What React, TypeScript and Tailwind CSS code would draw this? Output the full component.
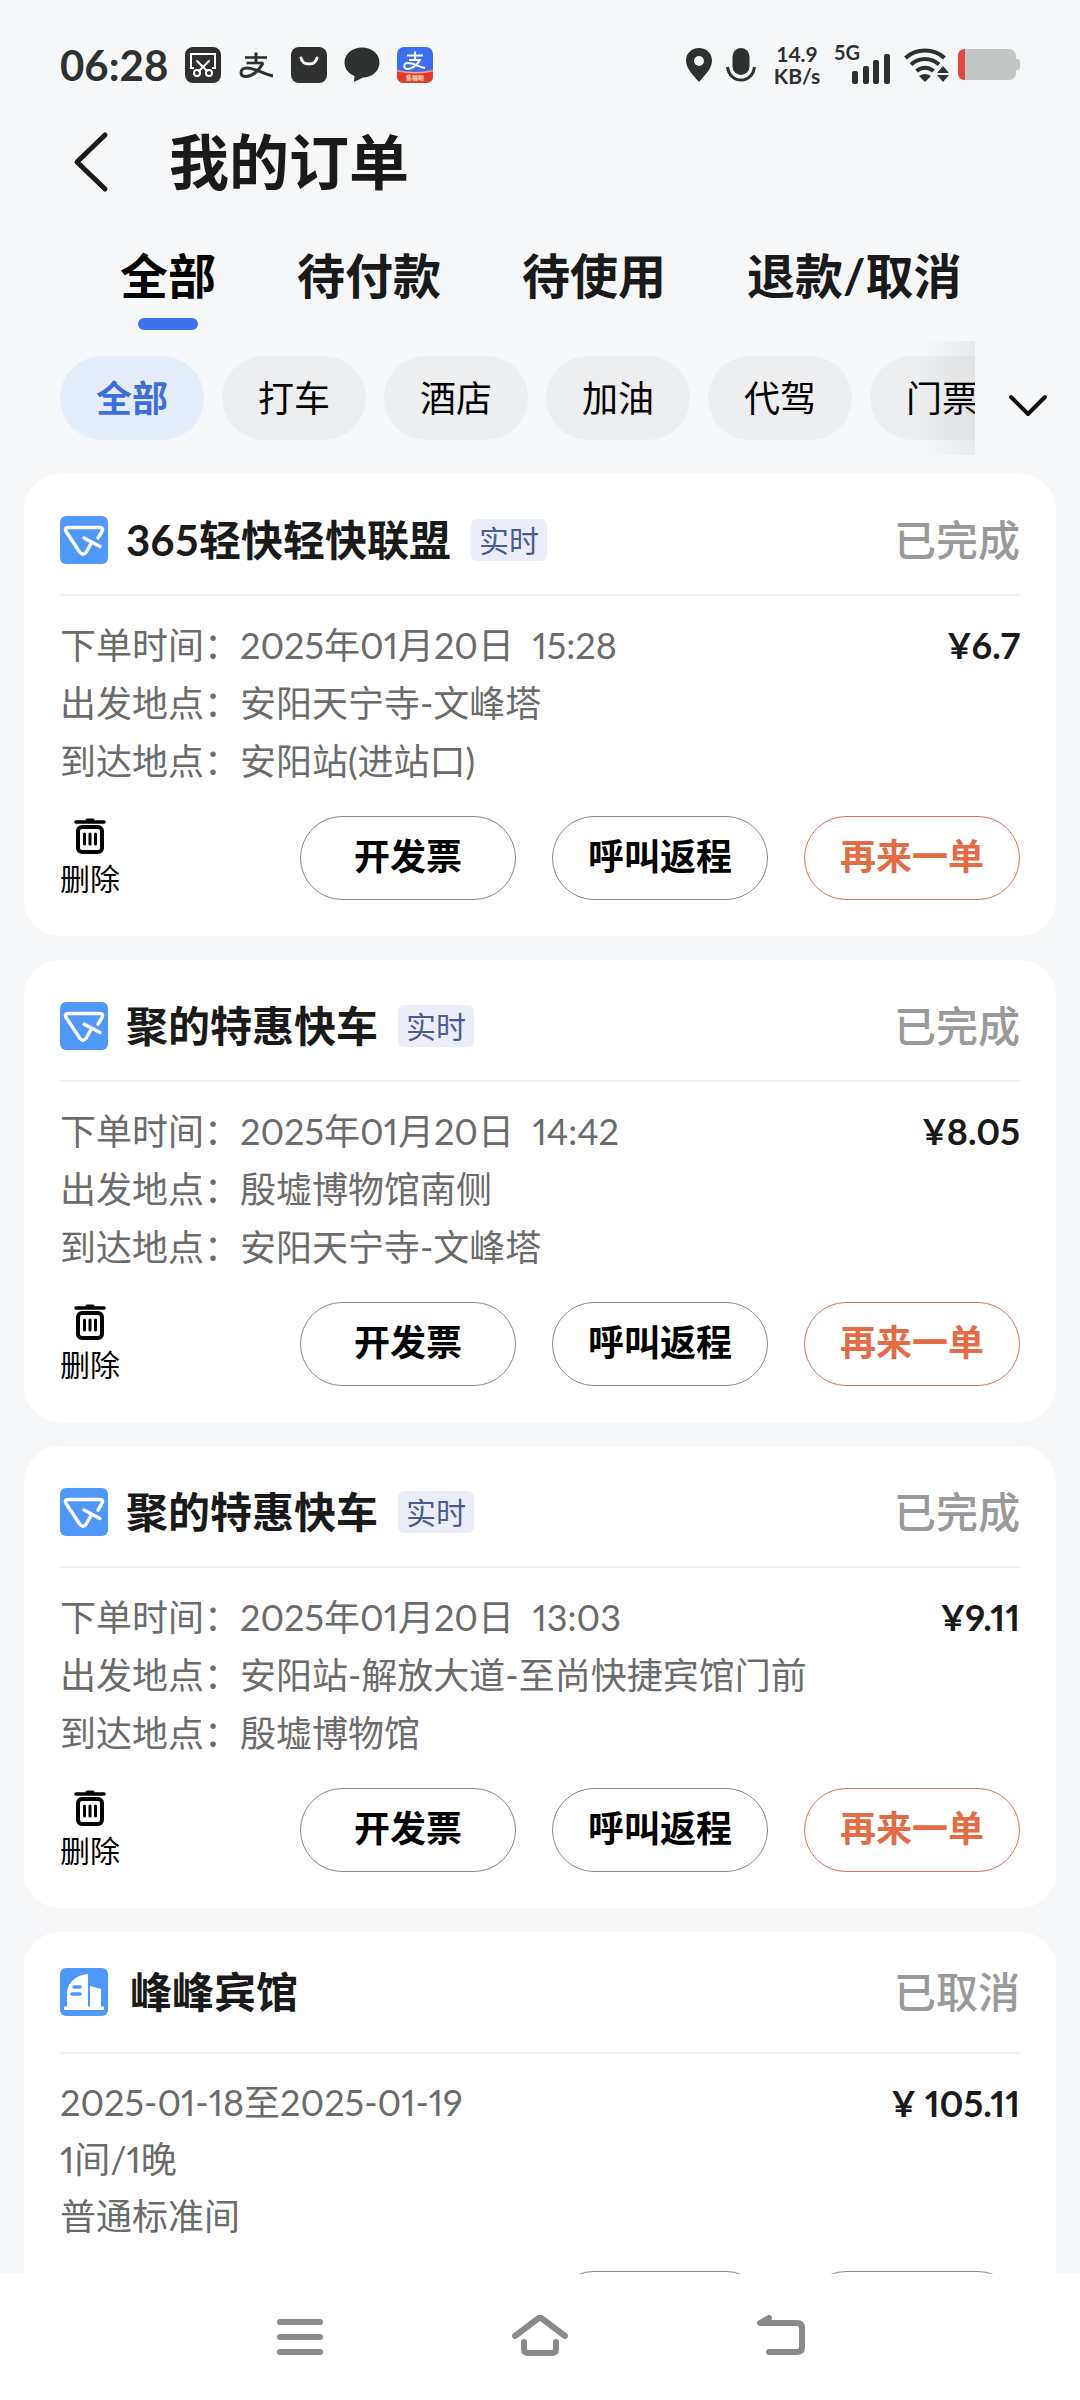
import React, { useState } from 'react';

interface Order {
    id: number;
    kind: 'ride' | 'hotel';
    title: string;
    tag?: string;
    status: string;
    price: string;
    lines: string[];
}

const TABS = ['全部', '待付款', '待使用', '退款/取消'];
const CATEGORIES = ['全部', '打车', '酒店', '加油', '代驾', '门票'];

const ORDERS: Order[] = [
    {
        id: 1,
        kind: 'ride',
        title: '365轻快轻快联盟',
        tag: '实时',
        status: '已完成',
        price: '¥6.7',
        lines: ['下单时间：2025年01月20日  15:28', '出发地点：安阳天宁寺-文峰塔', '到达地点：安阳站(进站口)'],
    },
    {
        id: 2,
        kind: 'ride',
        title: '聚的特惠快车',
        tag: '实时',
        status: '已完成',
        price: '¥8.05',
        lines: ['下单时间：2025年01月20日  14:42', '出发地点：殷墟博物馆南侧', '到达地点：安阳天宁寺-文峰塔'],
    },
    {
        id: 3,
        kind: 'ride',
        title: '聚的特惠快车',
        tag: '实时',
        status: '已完成',
        price: '¥9.11',
        lines: ['下单时间：2025年01月20日  13:03', '出发地点：安阳站-解放大道-至尚快捷宾馆门前', '到达地点：殷墟博物馆'],
    },
    {
        id: 4,
        kind: 'hotel',
        title: '峰峰宾馆',
        status: '已取消',
        price: '¥ 105.11',
        lines: ['2025-01-18至2025-01-19', '1间/1晚', '普通标准间'],
    },
];

const StatusBar: React.FC = () => (
    <div className="flex h-[102px] shrink-0 items-center justify-between px-[60px] pt-7 text-[#2f3131]">
        <div className="flex items-center">
            <span className="text-[42px] leading-9 font-bold">06:28</span>
            <div className="ml-[17px] flex items-center gap-[17px]">
                <svg width="36" height="36" viewBox="0 0 36 36">
                    <rect width="36" height="36" rx="8" fill="currentColor" />
                    <g fill="none" stroke="#fff" strokeWidth="2">
                        <path d="M9 21H6V7h24v14h-3" />
                        <path d="M12 14l10 10M24 14L14 24" strokeLinecap="round" />
                        <circle cx="12" cy="26" r="3" />
                        <circle cx="24" cy="26" r="3" />
                    </g>
                </svg>
                <svg width="36" height="36" viewBox="0 0 36 36">
                    <g fill="none" stroke="currentColor">
                        <path d="M7 10.500h22" strokeWidth="2.600" />
                        <path d="M18 5.500V16" strokeWidth="3" />
                        <path d="M8.500 16h17" strokeWidth="2.600" />
                        <path d="M25 16C21 24 14 29.500 8 29.500c-3 0-5-1.500-5-4 0-2.500 2.500-4.500 6-4.500 8 0 15 5.500 26 8" strokeWidth="3" />
                    </g>
                </svg>
                <svg width="36" height="36" viewBox="0 0 36 36">
                    <rect width="36" height="36" rx="8" fill="currentColor" />
                    <path d="M10 11c2 8 14 8 16 0" fill="none" stroke="#fff" strokeWidth="3" strokeLinecap="round" />
                </svg>
                <svg width="36" height="36" viewBox="0 0 36 36">
                    <path d="M18 0.500c10 0 17.500 6.500 17.500 15S28 30.500 19 30.500L10 35l0.500-6C4.500 26.500 0.500 22 0.500 15.500 0.500 7 8 0.500 18 0.500z" fill="currentColor" />
                </svg>
                <svg width="36" height="36" viewBox="0 0 36 36">
                    <rect width="36" height="36" rx="7" fill="#3a6ff0" />
                    <path d="M0 23q18 4 36 0v6q0 7-7 7H7q-7 0-7-7z" fill="#e23a2e" />
                    <path d="M0 23q18 4 36 0v1.500q-18 4-36 0z" fill="#f4a08a" />
                    <g fill="none" stroke="#fff" strokeWidth="2">
                        <path d="M10 8.500h16M18 4.500v8M12 13h12" />
                        <path d="M23 13c-3 5-8 9-12 9-5 0-5-6 0-6s10 3.500 17 5" />
                    </g>
                    <text x="18" y="32.500" textAnchor="middle" fontSize="6" fontWeight="700" fill="#ffe3c0">集福啦</text>
                </svg>
            </div>
        </div>
        <div className="flex items-center">
            <svg width="26" height="36" viewBox="0 0 26 36">
                <path fillRule="evenodd" d="M13 1C5.500 1 0 6.500 0 13.500 0 22 8 29 13 35c5-6 13-13 13-21.500C26 6.500 20.500 1 13 1zm0 8a5 5 0 110 10 5 5 0 010-10z" fill="currentColor" />
            </svg>
            <svg width="30" height="36" viewBox="0 0 30 36" className="ml-3.5">
                <rect x="6.500" y="1" width="17" height="27" rx="8.500" fill="currentColor" />
                <path d="M1.500 20C2.500 28 8 33 15 33s12.500-5 13.500-13" fill="none" stroke="currentColor" strokeWidth="3" />
            </svg>
            <div className="ml-3.5 w-[54px] text-center text-[21px] leading-[22px] font-bold">
                <div>14.9</div>
                <div>KB/s</div>
            </div>
            <svg width="58" height="52" viewBox="0 -6 58 52" className="ml-2.5">
                <text x="0" y="15" fontSize="20" fontWeight="700" fill="currentColor">5G</text>
                <g fill="currentColor">
                    <rect x="18" y="26" width="6" height="13" rx="2" />
                    <rect x="29" y="21" width="6" height="18" rx="2" />
                    <rect x="39" y="15" width="6" height="24" rx="2" />
                    <rect x="50" y="9" width="6" height="30" rx="2" />
                </g>
            </svg>
            <svg width="46" height="36" viewBox="0 0 46 36" className="ml-3">
                <g fill="none" stroke="currentColor" strokeWidth="4">
                    <path d="M1.500 11C12 1 30 1 40.500 11" />
                    <path d="M7 17.500C15 10 27 10 35 17.500" />
                    <path d="M12.500 24c5-4.500 12-4.500 17 0" />
                </g>
                <path d="M21 35l-6-6q6-4 12 0z" fill="currentColor" />
                <path d="M39 19l6 7H33zM39 35l6-7H33z" fill="currentColor" />
            </svg>
            <svg width="62" height="32" viewBox="0 0 62 32" className="ml-2">
                <rect width="58" height="31" rx="7" fill="#c4c6c6" />
                <rect x="56" y="10" width="6" height="11" rx="3" fill="#c4c6c6" />
                <path d="M7 0v31q-7 0-7-7V7q0-7 7-7z" fill="#df4a3e" />
            </svg>
        </div>
    </div>
);

const RideIcon: React.FC = () => (
    <svg width="48" height="48" viewBox="0 0 48 48" className="shrink-0">
        <rect width="48" height="48" rx="6" fill="#5098f7" />
        <path
            d="M38 22l4-6.500q2-4-2.500-4h-31q-4.500 0-2.500 4l14 21q3 3.500 6 0l5-9M24 22l16 8.500"
            fill="none"
            stroke="#fff"
            strokeWidth="3.400"
            strokeLinecap="round"
            strokeLinejoin="round"
        />
    </svg>
);

const HotelIcon: React.FC = () => (
    <svg width="48" height="48" viewBox="0 0 48 48" className="shrink-0">
        <rect width="48" height="48" rx="6" fill="#5098f7" />
        <path d="M28 6v33H7V24C8 14 16 7 28 6zM30 18l11 3v18H30z" fill="#fff" />
        <rect x="4" y="38.500" width="40" height="3.500" rx="1" fill="#fff" />
        <path d="M14 19h6M12 26h8" stroke="#5098f7" strokeWidth="3.500" strokeLinecap="round" />
    </svg>
);

const TrashIcon: React.FC = () => (
    <svg width="32" height="36" viewBox="0 0 32 36" fill="none" stroke="currentColor" strokeLinecap="round">
        <path d="M2 4h28" strokeWidth="3.500" />
        <path d="M13 2h6" strokeWidth="3" />
        <rect x="4" y="9" width="24" height="25" rx="4" strokeWidth="4" />
        <path d="M10.500 16v10M16 16v10M21.500 16v10" strokeWidth="3" />
    </svg>
);

const PillButton: React.FC<{ label: string; accent?: boolean }> = ({ label, accent }) => (
    <button
        className={`h-[84px] w-[216px] rounded-full border pb-1 text-4xl font-bold ${
            accent ? 'border-[#dc7452] text-[#e36c45]' : 'border-[#888] text-black'
        }`}
    >
        {label}
    </button>
);

const OrderCard: React.FC<{ order: Order }> = ({ order }) => {
    const isRide = order.kind === 'ride';

    return (
        <article className="rounded-[36px] bg-white px-9 pb-9">
            {/* Card header */}
            <div className={`flex items-center border-b-2 border-[#f0f0f1] ${isRide ? 'pt-[42px] pb-[30px]' : 'py-9'}`}>
                {isRide ? <RideIcon /> : <HotelIcon />}
                <h2 className={`text-[42px] leading-[48px] font-bold text-[#1a1a1a] ${isRide ? 'ml-[18px]' : 'ml-[22px]'}`}>{order.title}</h2>
                {order.tag && (
                    <span className="ml-5 rounded-md bg-[#ebeef8] px-2 text-[30px] leading-[42px] text-[#4b5b93]">{order.tag}</span>
                )}
                <span className="ml-auto text-[42px] leading-[48px] font-medium text-[#999]">{order.status}</span>
            </div>

            {/* Order details */}
            <div className="flex justify-between pt-5 text-4xl proportional-nums">
                <div className={`whitespace-pre text-[#6b6b6b] ${isRide ? 'leading-[58px]' : 'leading-[57px]'}`}>
                    {order.lines.map(line => (
                        <p key={line}>{line}</p>
                    ))}
                </div>
                <p className="leading-[58px] font-bold text-[#1a1a1a]">{order.price}</p>
            </div>

            {/* Actions */}
            <div className="mt-[26px] flex items-center justify-between">
                {isRide ? (
                    <button className="flex flex-col items-center gap-1 text-black">
                        <TrashIcon />
                        <span className="text-[30px] leading-10">删除</span>
                    </button>
                ) : (
                    <span />
                )}
                <div className="flex gap-9">
                    {isRide && <PillButton label="开发票" />}
                    <PillButton label={isRide ? '呼叫返程' : '删除订单'} />
                    <PillButton label={isRide ? '再来一单' : '再次预订'} accent={isRide} />
                </div>
            </div>
        </article>
    );
};

const App: React.FC = () => {
    const [activeTab, setActiveTab] = useState('全部');
    const [activeCategory, setActiveCategory] = useState('全部');

    return (
        <div className="flex h-screen flex-col bg-[#f5f7f9] font-['Lato','Noto_Sans_CJK_SC',sans-serif]">
            <StatusBar />

            <header className="flex h-[120px] shrink-0 items-center pl-[72px]">
                <button aria-label="返回">
                    <svg width="38" height="64" viewBox="0 0 38 64" fill="none" stroke="#1a1a1a" strokeWidth="5" strokeLinecap="round" strokeLinejoin="round">
                        <path d="M33 5L5 32l28 27" />
                    </svg>
                </button>
                <h1 className="ml-[59px] text-6xl font-bold text-[#1a1a1a]">我的订单</h1>
            </header>

            {/* Status tabs */}
            <nav className="flex shrink-0 gap-[81px] px-[120px] pt-6">
                {TABS.map(tab => (
                    <button
                        key={tab}
                        onClick={() => setActiveTab(tab)}
                        className={`flex shrink-0 flex-col items-center gap-3 text-5xl leading-[60px] font-bold whitespace-nowrap ${
                            activeTab === tab ? 'text-black' : 'text-[#1a1a1a]'
                        }`}
                    >
                        {tab}
                        <span className={`h-3 w-[60px] rounded-full ${activeTab === tab ? 'bg-[#3e71ee]' : ''}`} />
                    </button>
                ))}
            </nav>

            {/* Category filter */}
            <div className="mt-[11px] flex shrink-0 items-center">
                <div className="relative flex-1 overflow-hidden py-[15px] pl-[60px]">
                    <div className="flex gap-[18px]">
                        {CATEGORIES.map(category => (
                            <button
                                key={category}
                                onClick={() => setActiveCategory(category)}
                                className={`h-[84px] w-36 shrink-0 rounded-full text-4xl ${
                                    activeCategory === category ? 'bg-[#e6edfa] font-bold text-[#3f6edb]' : 'bg-[#edeef0] text-black'
                                }`}
                            >
                                {category}
                            </button>
                        ))}
                    </div>
                    <div className="pointer-events-none absolute inset-y-0 right-0 w-14 bg-linear-to-r from-transparent to-black/5" />
                </div>
                <button aria-label="展开" className="flex w-[105px] justify-center pt-4">
                    <svg width="40" height="24" viewBox="0 0 40 24" fill="none" stroke="#111" strokeWidth="4" strokeLinecap="round" strokeLinejoin="round">
                        <path d="M3 3l17 17L37 3" />
                    </svg>
                </button>
            </div>

            <main className="mt-[19px] flex flex-1 flex-col gap-6 overflow-hidden px-6">
                {ORDERS.map(order => (
                    <OrderCard key={order.id} order={order} />
                ))}
            </main>

            {/* System navigation */}
            <footer className="flex h-[126px] shrink-0 items-center justify-center gap-[180px] bg-white pt-1 text-[#8a8a8a]">
                <button aria-label="最近任务">
                    <svg width="60" height="48" viewBox="0 0 60 48" fill="none" stroke="currentColor" strokeWidth="6" strokeLinecap="round">
                        <path d="M10 7h40M10 22h40M10 37h40" />
                    </svg>
                </button>
                <button aria-label="主屏幕">
                    <svg width="60" height="48" viewBox="0 0 60 48" fill="none" stroke="currentColor" strokeWidth="6" strokeLinecap="round" strokeLinejoin="round">
                        <path d="M5 20L30 1l25 19M14 26v7q0 4 4 4h24q4 0 4-4v-7" transform="translate(0 1)" />
                    </svg>
                </button>
                <button aria-label="返回上一级">
                    <svg width="60" height="48" viewBox="0 0 60 48" fill="none" stroke="currentColor" strokeWidth="6" strokeLinecap="round" strokeLinejoin="round">
                        <path d="M19 3L10 8h37q5 0 5 5v19q0 5-5 5H19" />
                    </svg>
                </button>
            </footer>
        </div>
    );
};

export default App;
